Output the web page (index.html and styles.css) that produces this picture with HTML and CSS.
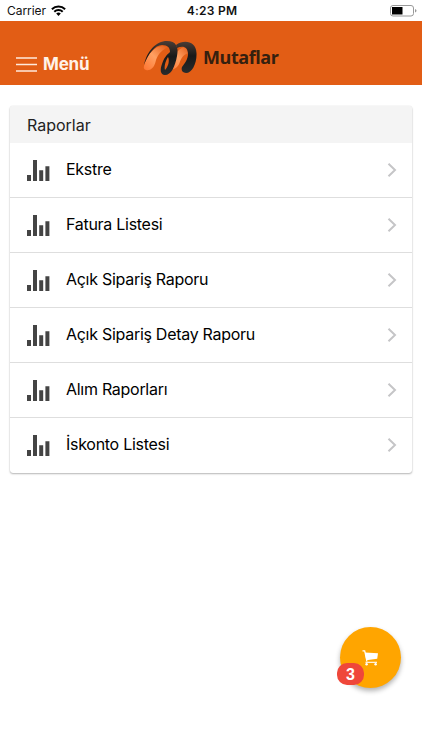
FILE: index.html
```html
<!DOCTYPE html>
<html lang="tr">
<head>
<meta charset="utf-8">
<title>Mutaflar</title>
<link rel="stylesheet" href="styles.css">
</head>
<body>
<svg class="defs" width="0" height="0" aria-hidden="true">
  <symbol id="bars" viewBox="0 0 23 21"><path d="M0 15h4v6H0zM6 0h4v21H6zM12.2 10.2h4V21h-4zM18.4 6.2h4V21h-4z" fill="#444"/></symbol>
  <symbol id="chevron" viewBox="0 0 10 16"><path d="M1.5 1.7 8 8l-6.500 6.300" fill="none" stroke="#c5c5c7" stroke-width="2"/></symbol>
</svg>
<div class="status">
  <div class="carrier"><span>Carrier</span>
    <svg width="15" height="11" viewBox="0 0 15 11"><g fill="none" stroke="#000" stroke-width="2"><path d="M.9 4.200a9.400 9.400 0 0 1 13.200 0"/><path d="M3.300 6.800a6 6 0 0 1 8.400 0"/></g><path d="M5.200 8.500a3.300 3.300 0 0 1 4.600 0L7.500 10.900z"/></svg>
  </div>
  <span class="time">4:23 PM</span>
  <svg class="battery" width="27" height="12" viewBox="0 0 27 12"><rect x=".5" y=".5" width="23" height="10.500" rx="2.500" fill="#fff" stroke="#999"/><path d="M2 2h10.500v7.500H2z"/><path d="M25 4q1.500.5 1.500 1.800T25 7.600z" fill="#999"/></svg>
</div>
<header class="bar">
  <div class="menu">
    <svg width="21" height="15" viewBox="0 0 21 15"><path d="M0 1h21M0 7.500h21M0 14h21" stroke="#ffe9dc" stroke-width="1.700"/></svg>
    <span>Menü</span>
  </div>
  <div class="brand">
    <svg width="56" height="36" viewBox="0 0 56 36">
      <defs>
        <linearGradient id="o" x1="0" y1="1" x2="1" y2="0"><stop offset="0" stop-color="#ff7430"/><stop offset=".5" stop-color="#ffa062"/><stop offset="1" stop-color="#e45b16"/></linearGradient>
        <linearGradient id="k" x1="0" y1="0" x2="0" y2="1"><stop offset="0" stop-color="#4a3d36"/><stop offset=".45" stop-color="#191919"/><stop offset="1" stop-color="#292b2c"/></linearGradient>
      </defs>
      <path d="M1 26C4 15 11 6 20 6l5 1c-8 4-11 9-12.500 15C11 28 7 31 3 30q-3-1-2-4z" fill="url(#o)"/>
      <path d="M26 30C29 19 34 8 42 7l4 6c-5 1-8 5-9.500 10-1.500 4-5 7-10.500 7z" fill="url(#o)"/>
      <path d="M1 25C4 11 13 1 24 1c9 0 12 6 10 15-2 11-6 19-12 19-5 0-5-6-3-11 2-6 4.500-9 8-12 0-4-2-7-8-7C12 5 5 14 1 25zM25 17c-3 5-4 10-3 13 3-3 5-9 3-13z" fill="url(#k)"/>
      <path d="M33 5c8-6 20-4 20.500 8C54 23 49 33 43 33c-4 0-5-3-4-6 3-4 6-8 6-13 0-7-5-9-11-6z" fill="url(#k)"/>
    </svg>
    <span>Mutaflar</span>
  </div>
</header>
<main class="card">
  <h1>Raporlar</h1>
  <ul>
    <li><svg class="chart"><use href="#bars"/></svg><span>Ekstre</span><svg class="chev"><use href="#chevron"/></svg></li>
    <li><svg class="chart"><use href="#bars"/></svg><span>Fatura Listesi</span><svg class="chev"><use href="#chevron"/></svg></li>
    <li><svg class="chart"><use href="#bars"/></svg><span>Açık Sipariş Raporu</span><svg class="chev"><use href="#chevron"/></svg></li>
    <li><svg class="chart"><use href="#bars"/></svg><span>Açık Sipariş Detay Raporu</span><svg class="chev"><use href="#chevron"/></svg></li>
    <li><svg class="chart"><use href="#bars"/></svg><span>Alım Raporları</span><svg class="chev"><use href="#chevron"/></svg></li>
    <li><svg class="chart"><use href="#bars"/></svg><span>İskonto Listesi</span><svg class="chev"><use href="#chevron"/></svg></li>
  </ul>
</main>
<div class="fab">
  <svg width="17" height="16" viewBox="0 0 17 16"><path d="M.5.8h2.200l2.200 10.700" fill="none" stroke="#fff" stroke-width="1.200"/><path d="M2.800 2.400 16 3.200l-.8 5.600L4.300 10.300z" fill="#fff"/><path d="M3.500 12.300h11.500" fill="none" stroke="#fff" stroke-width="1.100"/><circle cx="4.600" cy="14.300" r="1.200" fill="#fff"/><circle cx="13.600" cy="14.300" r="1.200" fill="#fff"/></svg>
  <span class="badge">3</span>
</div>
</body>
</html>
```
FILE: styles.css
```css
* { box-sizing: border-box; }
body { margin: 0; height: 750px; background: #fff; color: #111; font-family: Inter, "Liberation Sans", sans-serif; overflow: hidden; }
.defs { position: absolute; }
.status { height: 21px; display: grid; grid-template-columns: 1fr auto 1fr; align-items: center; padding: 0 5px 0 7px; line-height: 20px; }
.carrier { display: flex; align-items: center; gap: 5px; font-size: 12px; letter-spacing: -.05px; }
.time { font-size: 12px; font-weight: 600; letter-spacing: .25px; }
.battery { justify-self: end; }
.bar { height: 64px; background: #e25d15; display: flex; align-items: flex-start; }
.menu { width: 143px; padding: 32px 0 0 16px; display: flex; align-items: center; gap: 6px; color: #fff2e8; font-size: 17px; line-height: 21px; font-weight: 700; letter-spacing: -.2px; }
.menu span { padding-top: 1px; }
.brand { display: flex; align-items: center; gap: 4px; padding-top: 19px; color: #35200f; font: 700 18px/36px "Open Sans", sans-serif; letter-spacing: -.45px; }
.brand span { margin-top: -2px; }
.card { margin: 21px 10px 0; border-radius: 3px; overflow: hidden; background: #fff; box-shadow: 0 1px 2px rgba(0,0,0,.28), 0 0 1px rgba(0,0,0,.2); }
h1 { margin: 0; height: 37px; padding-left: 17px; background: #f4f4f4; color: #222; font-size: 16px; line-height: 38px; font-weight: 400; }
ul { margin: 0; padding: 0; list-style: none; }
li { height: 55px; display: flex; align-items: center; padding: 0 15px 0 17px; border-bottom: 1px solid #dedede; font-size: 16px; letter-spacing: -.28px; }
li:last-child { border-bottom-color: transparent; }
li span { flex: 1; margin-left: 16px; line-height: 20px; padding-bottom: 2px; color: #000; }
.chart { width: 23px; height: 21px; }
.chev { width: 10px; height: 16px; }
.fab { position: absolute; left: 340px; top: 627px; width: 61px; height: 61px; border-radius: 50%; background: #ffa500; display: flex; align-items: center; justify-content: center; box-shadow: 0 3px 5px rgba(0,0,0,.3); }
.badge { position: absolute; left: -3px; top: 36px; width: 27px; height: 22px; border-radius: 10px; background: #ef473a; color: #fff; font: 700 16px/23px "Liberation Sans", sans-serif; text-align: center; }
```
